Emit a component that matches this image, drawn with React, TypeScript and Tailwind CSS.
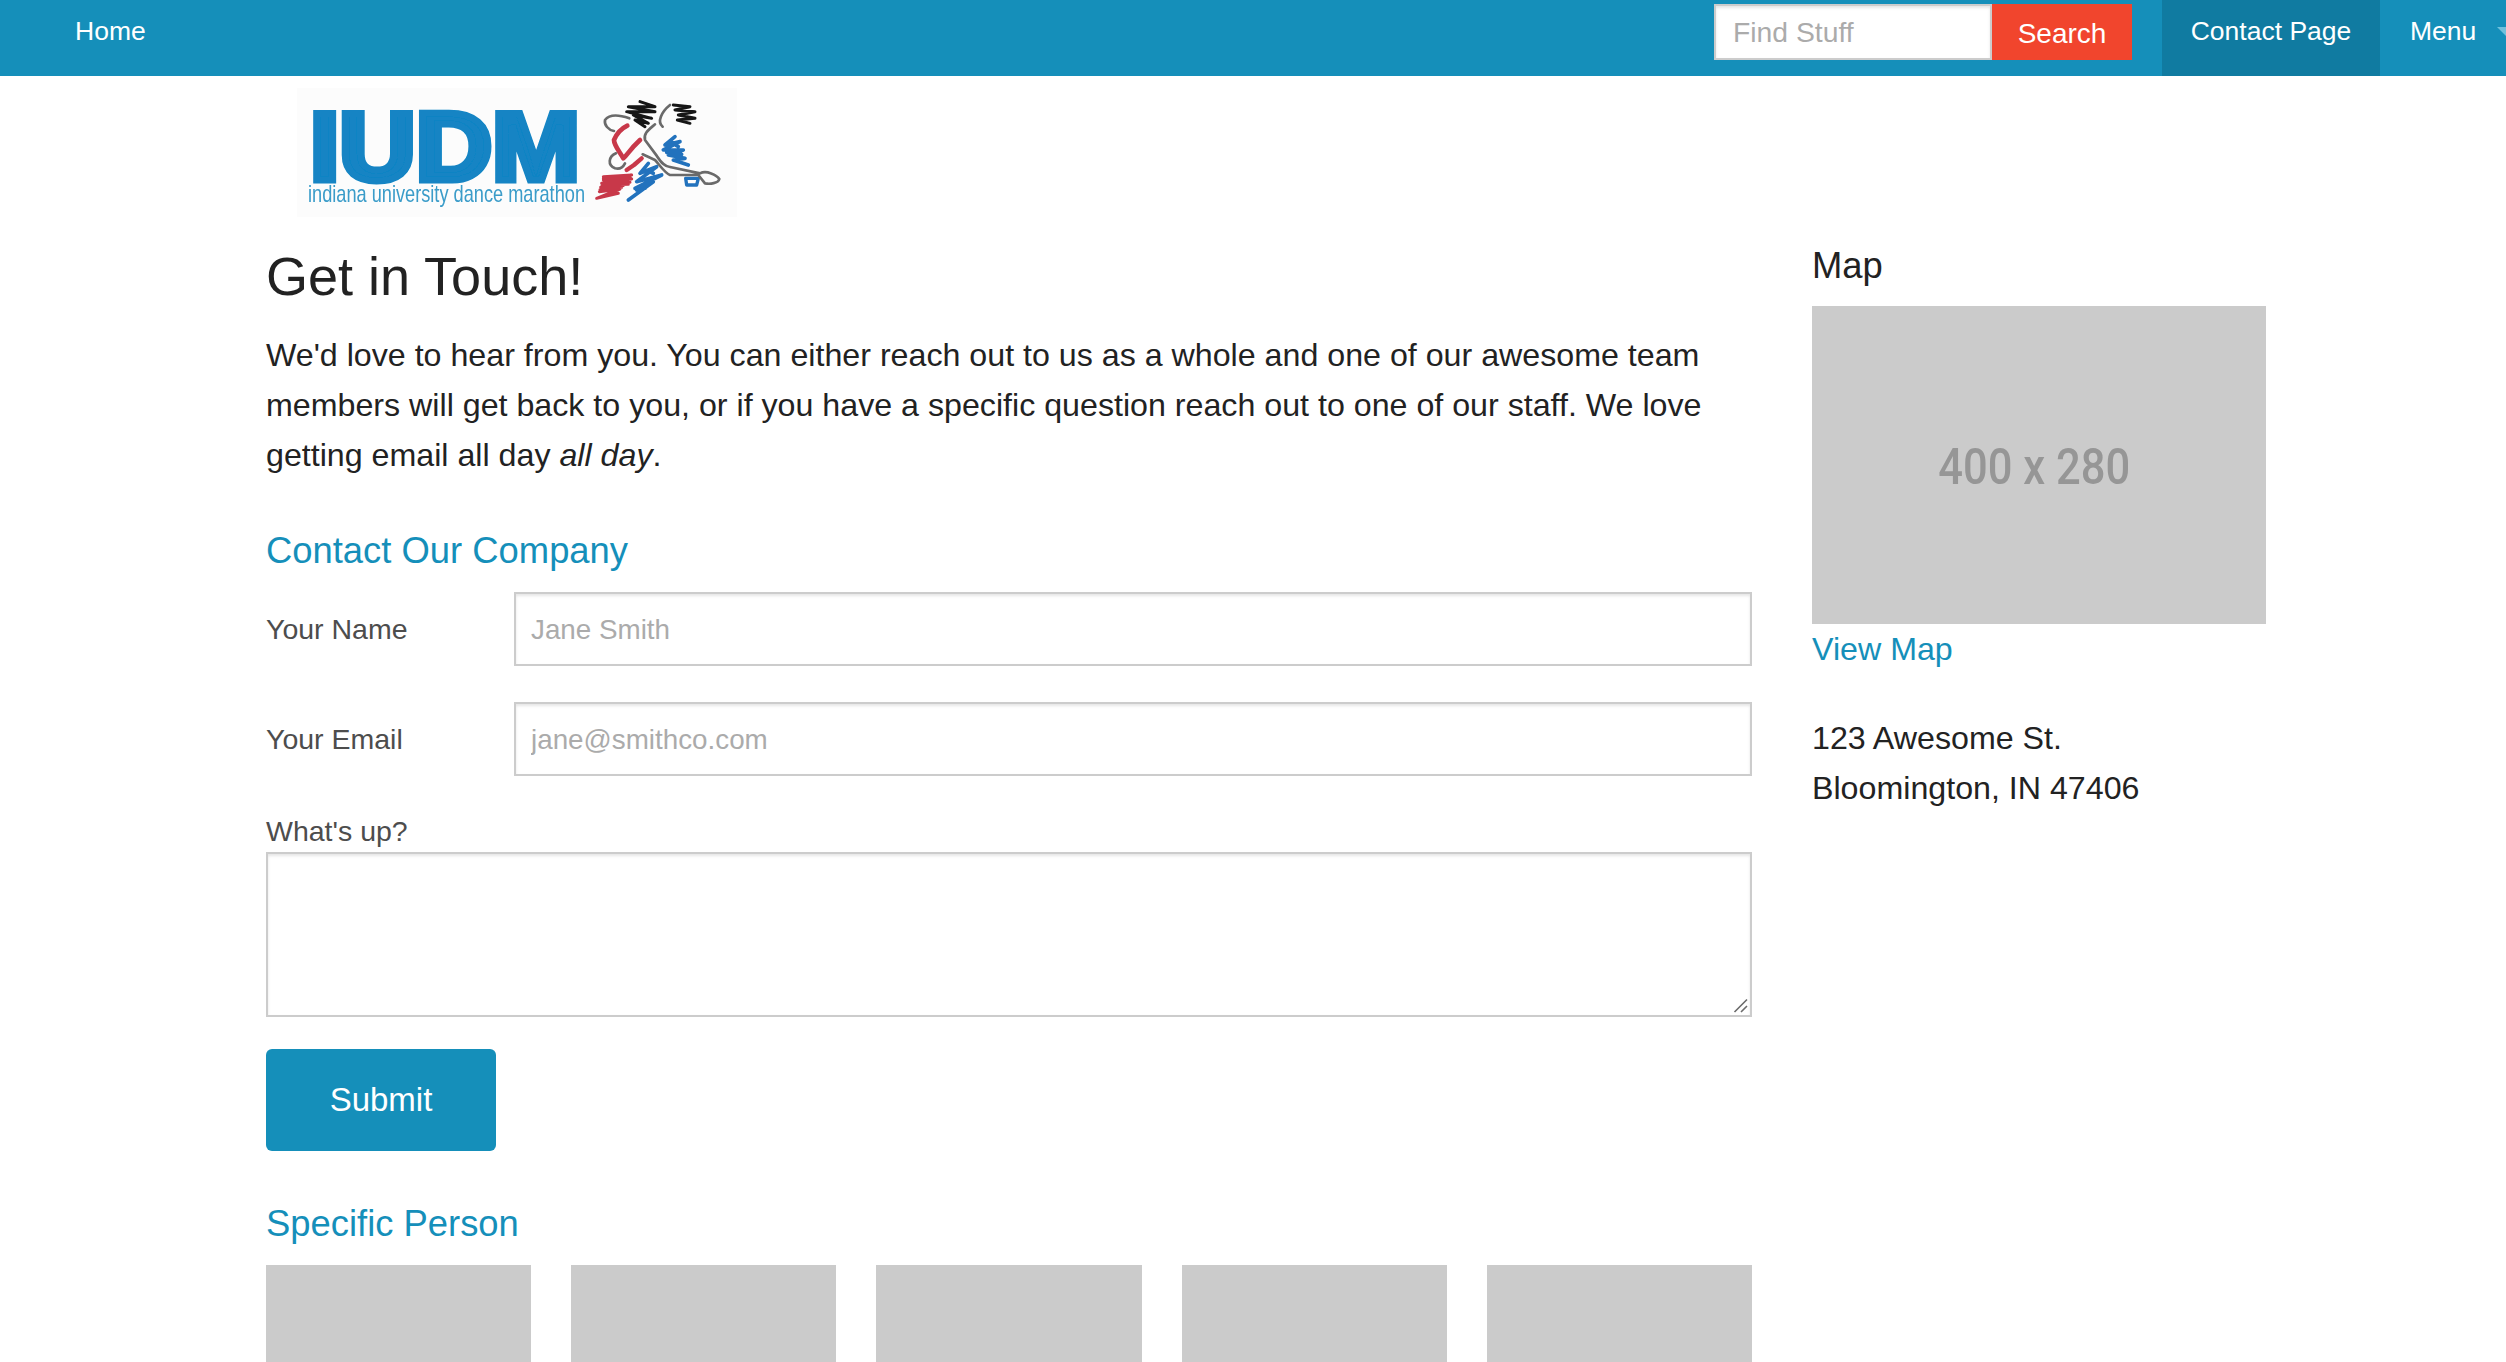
import React from 'react';

const sans = { fontFamily: '"Liberation Sans", Arial, sans-serif' };

function Logo() {
  return (
    <svg width="440" height="129" viewBox="0 0 440 129" className="block bg-[#fcfcfc]">
      <defs>
        <filter id="soft">
          <feGaussianBlur stdDeviation="0.6" />
        </filter>
      </defs>
      <g filter="url(#soft)">
        <text x="13" y="91.5" fontSize="96" fontWeight="700" fill="#1284c4" stroke="#1284c4" strokeWidth="7" textLength="270" lengthAdjust="spacingAndGlyphs" fontFamily="Liberation Sans">IUDM</text>
        <text x="11" y="114" fontSize="24" fill="#3a9cc9" textLength="277" lengthAdjust="spacingAndGlyphs" fontFamily="Liberation Sans">indiana university dance marathon</text>
        {/* dancer, drawn in the coordinates of a 3x crop */}
        <g transform="translate(293 7) scale(0.3333)" fill="none" strokeLinecap="round" strokeLinejoin="round">
          <path d="M40 245 L125 240 L40 255 L125 252 L35 265 L120 262 L32 277 L100 272 L28 290 L90 282 L20 310 L85 295 M40 250 L120 246 M36 270 L115 268 M30 284 L95 277" stroke="#c8384a" strokeWidth="9" />
          <path d="M112 92 C95 100 82 112 72 135 C72 150 85 165 100 190 C112 180 118 165 150 135" stroke="#c8384a" strokeWidth="14" />
          <path d="M110 225 L132 210 L155 190" stroke="#c8384a" strokeWidth="13" />
          <path d="M255 125 L225 150 L270 140 L220 165 L280 165 L235 180 L285 190 L250 195 L295 210 M240 140 L265 155 M230 172 L275 178" stroke="#2072bd" strokeWidth="11" />
          <path d="M175 205 L150 235 L200 215 L140 260 L215 240 L135 280 L190 260 L115 315 M165 225 L190 235 M150 255 L185 250 M140 285 L165 280" stroke="#2072bd" strokeWidth="11" />
          <path d="M287 250 L325 250 L320 270 L290 270 Z" stroke="#2072bd" strokeWidth="10" />
          <path d="M118 70 C95 62 60 55 45 75 C42 90 55 105 72 108" stroke="#6a6a6a" strokeWidth="8" />
          <path d="M78 175 C55 185 52 210 75 220 C90 224 100 215 105 205" stroke="#6a6a6a" strokeWidth="8" />
          <path d="M240 30 C215 50 200 80 218 95" stroke="#6a6a6a" strokeWidth="8" />
          <path d="M195 88 C175 105 160 115 165 135 L200 182 C215 205 225 215 240 216 L330 235 C350 225 380 240 388 252 C385 265 360 268 345 265 L325 240 L240 240 C225 235 205 205 195 195 L158 178" stroke="#6a6a6a" strokeWidth="8" />
          <path d="M150 20 L195 35 L115 35 L195 50 L110 50 L185 70 L130 60 L175 85 L135 75 L165 95" stroke="#141414" strokeWidth="9" />
          <path d="M250 30 L300 35 L255 45 L315 50 L265 60 L315 70 L262 75 L300 85" stroke="#141414" strokeWidth="9" />
        </g>
      </g>
    </svg>
  );
}

function Field({ label, placeholder, top }: { label: string; placeholder: string; top?: boolean }) {
  return (
    <div className={`flex items-center ${top ? 'mt-[36px]' : 'mt-[19px]'}`}>
      <label className="w-[248px] shrink-0 pt-[1px] text-[28.5px] text-[#4d4d4d]">{label}</label>
      <input
        placeholder={placeholder}
        className="h-[74px] flex-1 border-2 border-[#cccccc] px-[15px] pt-[1px] text-[27.8px] shadow-[inset_0_2px_3px_rgba(0,0,0,0.1)] outline-none placeholder:text-[#ababab]"
      />
    </div>
  );
}

export default function App() {
  return (
    <div style={sans} className="h-[1362px] w-full overflow-hidden bg-white text-[#222222]">
      <nav className="flex h-[76px] items-stretch bg-[#158fba] text-white">
        <a className="ml-[75px] mt-[15px] text-[26.5px] leading-[32px]">Home</a>
        <div className="ml-auto mt-[4px] flex h-[56px]">
          <input
            placeholder="Find Stuff"
            className="w-[278px] border-2 border-[#cccccc] bg-white px-[17px] text-[28.3px] text-black shadow-[inset_0_2px_3px_rgba(0,0,0,0.1)] outline-none placeholder:text-[#ababab]"
          />
          <button className="w-[140px] bg-[#f1452d] pt-[3px] text-[28px] text-white">Search</button>
        </div>
        <a className="ml-[30px] flex w-[218px] justify-center bg-[#107ba1] pt-[15px] text-[26.5px] leading-[32px]">Contact Page</a>
        <div className="flex w-[126px] shrink-0 pl-[30px] pt-[15px]">
          <a className="text-[26.5px] leading-[32px]">Menu</a>
          <span className="ml-[21px] mt-[12px] h-0 w-0 shrink-0 border-x-[10px] border-t-[10px] border-x-transparent border-t-[#6fc0dc]" />
        </div>
      </nav>

      <div className="ml-[297px] mt-[12px] w-fit">
        <Logo />
      </div>

      <div className="ml-[266px] flex">
        <main className="w-[1486px] shrink-0">
          <h1 className="mt-[23px] text-[54px] leading-[72px]">Get in Touch!</h1>
          <p className="mt-[18px] text-[32.2px] leading-[50px]">
            We'd love to hear from you. You can either reach out to us as a whole and one of our awesome team members will get back to you, or if you have a specific question reach out to one of our staff. We love getting email all day <em>all day</em>.
          </p>

          <h2 className="mt-[49px] text-[36.4px] leading-[44px] text-[#158fba]">Contact Our Company</h2>
          <Field label="Your Name" placeholder="Jane Smith" />
          <Field label="Your Email" placeholder="jane@smithco.com" top />

          <label className="mt-[37px] block text-[28.5px] leading-[36px] text-[#4d4d4d]">What's up?</label>
          <div className="relative mt-[3px]">
            <textarea className="block h-[165px] w-full resize-none border-2 border-[#cccccc] shadow-[inset_0_2px_3px_rgba(0,0,0,0.1)] outline-none" />
            <svg width="16" height="16" viewBox="0 0 16 16" className="absolute bottom-[3px] right-[3px]">
              <path d="M1.5 14 L14 1.5 M8 14 L14 8" stroke="#6b6b6b" strokeWidth="1.6" fill="none" />
            </svg>
          </div>

          <button className="mt-[32px] block h-[102px] w-[230px] rounded-[6px] bg-[#158fba] text-[33px] text-white">Submit</button>

          <h2 className="mt-[51px] text-[36.4px] leading-[44px] text-[#158fba]">Specific Person</h2>
          <div className="mt-[19px] grid grid-cols-5 gap-[40px]">
            {[0, 1, 2, 3, 4].map((i) => (
              <div key={i} className="h-[266px] bg-[#cbcbcb]" />
            ))}
          </div>
        </main>

        <aside className="ml-[60px] w-[454px] shrink-0">
          <h3 className="mt-[27px] text-[36.4px] leading-[44px]">Map</h3>
          <div className="mt-[18px] flex h-[318px] items-center justify-center bg-[#cbcbcb]">
            <span style={{ fontFamily: 'Roboto, sans-serif' }} className="mr-[9px] mt-[4px] scale-x-[0.87] text-[50px] font-medium text-[#969696]">400 x 280</span>
          </div>
          <a className="block text-[32.2px] leading-[50px] text-[#158fba]">View Map</a>
          <p className="mt-[39px] text-[32.2px] leading-[50px]">
            123 Awesome St.
            <br />
            Bloomington, IN 47406
          </p>
        </aside>
      </div>
    </div>
  );
}
